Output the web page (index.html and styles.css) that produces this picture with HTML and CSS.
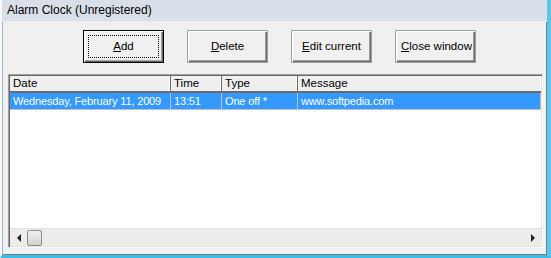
FILE: index.html
```html
<!DOCTYPE html>
<html lang="en">
<head>
    <meta charset="UTF-8">
    <title>Alarm Clock (Unregistered)</title>
    <link rel="stylesheet" href="styles.css">
</head>
<body>
    <div class="window">
        <div class="titlebar">Alarm Clock (Unregistered)</div>

        <div class="client">
            <!-- Buttons -->
            <div class="toolbar">
                <button class="btn default"><span class="focus"><u>A</u>dd</span></button>
                <button class="btn"><span class="focus"><u>D</u>elete</span></button>
                <button class="btn"><span class="focus"><u>E</u>dit current</span></button>
                <button class="btn"><span class="focus"><u>C</u>lose window</span></button>
            </div>

            <!-- Alarm list -->
            <div class="list">
                <div class="list-body">
                    <div class="row header">
                        <div class="cell c-date">Date</div>
                        <div class="cell c-time">Time</div>
                        <div class="cell c-type">Type</div>
                        <div class="cell c-msg">Message</div>
                    </div>
                    <div class="row item selected">
                        <div class="cell c-date">Wednesday, February 11, 2009</div>
                        <div class="cell c-time">13:51</div>
                        <div class="cell c-type">One off *</div>
                        <div class="cell c-msg">www.softpedia.com</div>
                    </div>
                </div>
                <div class="hscroll">
                    <span class="arrow left"></span>
                    <span class="thumb"></span>
                    <span class="track"></span>
                    <span class="arrow right"></span>
                </div>
            </div>
        </div>
    </div>
</body>
</html>
```

FILE: styles.css
```css
body {
    margin: 0;
    padding: 0;
    background-color: #f0f0f0;
    font-family: "Liberation Sans", Arial, sans-serif;
    font-size: 11px;
    color: #000;
}
.window {
    width: 551px;
    height: 258px;
    box-sizing: border-box;
    background-color: #f0f0f0;
    border-left: 2px solid #f7f9fb;
    border-right: 4px solid #5fc3e8;
    border-bottom: 3px solid #3bbde6;
    display: flex;
    flex-direction: column;
    overflow: hidden;
}
.titlebar {
    height: 21px;
    line-height: 21px;
    padding-left: 5px;
    background-color: #d9dfe8;
    font-size: 12px;
    border-bottom: 1px solid #e9edf2;
}
.client {
    flex: 1;
    display: flex;
    flex-direction: column;
    border-left: 1px solid #9fb4cc;
    border-right: 1px solid #6f7f90;
    border-bottom: 1px solid #6f7f90;
    padding: 8px 3px 6px 5px;
}
.toolbar {
    display: flex;
    gap: 23px;
    padding-left: 75px;
    height: 33px;
}
.btn {
    width: 81px;
    height: 33px;
    padding: 0;
    margin: 0;
    background-color: #f0f0f0;
    font-family: "Liberation Sans", Arial, sans-serif;
    font-size: 11.5px;
    color: #000;
    border: 1px solid #a0a0a0;
    box-shadow: inset 1px 1px 0 #ffffff, inset -1px -1px 0 #696969, inset -2px -2px 0 #a0a0a0;
    display: flex;
    align-items: center;
    justify-content: center;
}
.btn .focus {
    display: block;
    box-sizing: border-box;
    width: 71px;
    height: 23px;
    line-height: 21px;
    text-align: center;
    white-space: nowrap;
    border: 1px dotted transparent;
}
.btn.default {
    border: 1px solid #000;
}
.btn.default .focus {
    border: 1px dotted #000;
}
.list {
    margin-top: 11px;
    flex: 1;
    display: flex;
    flex-direction: column;
    background-color: #fff;
    border-top: 1px solid #a0a0a0;
    border-left: 1px solid #a0a0a0;
    border-right: 1px solid #ffffff;
    border-bottom: 1px solid #ffffff;
    box-shadow: inset 1px 1px 0 #696969, inset -1px -1px 0 #e3e3e3;
    padding: 1px;
}
.list-body {
    flex: 1;
}
.row {
    display: flex;
    height: 16px;
    line-height: 16px;
}
.cell {
    box-sizing: border-box;
    padding-left: 3px;
    white-space: nowrap;
    overflow: hidden;
}
.c-date { width: 161px; }
.c-time { width: 51px; }
.c-type { width: 76px; }
.c-msg { flex: 1; }
.header {
    background-color: #efefef;
    border-bottom: 2px solid #6a6a6a;
    height: 15px;
    line-height: 15px;
    font-size: 11.5px;
}
.header .cell {
    border-right: 1px solid #6a6a6a;
    box-shadow: inset -1px 0 0 #ffffff;
}
.header .c-msg {
    border-right: none;
}
.item {
    border-bottom: 1px solid #c0c0c0;
    letter-spacing: -0.15px;
}
.item .cell {
    border-right: 1px solid #c0c0c0;
}
.selected {
    background-color: #3399ff;
    color: #fff;
}
.hscroll {
    height: 17px;
    display: flex;
    align-items: center;
    background-color: #ececec;
    border-top: 1px solid #e2e2e2;
}
.arrow {
    width: 17px;
    height: 17px;
    display: flex;
    align-items: center;
    justify-content: center;
}
.arrow::before {
    content: "";
    border-top: 4px solid transparent;
    border-bottom: 4px solid transparent;
}
.arrow.left::before {
    border-right: 4px solid #202020;
}
.arrow.right::before {
    border-left: 4px solid #202020;
}
.thumb {
    width: 13px;
    height: 14px;
    border: 1px solid #8a8a8a;
    border-radius: 2px;
    background: linear-gradient(#f2f2f2, #d2d2d2);
}
.track {
    flex: 1;
}
```
